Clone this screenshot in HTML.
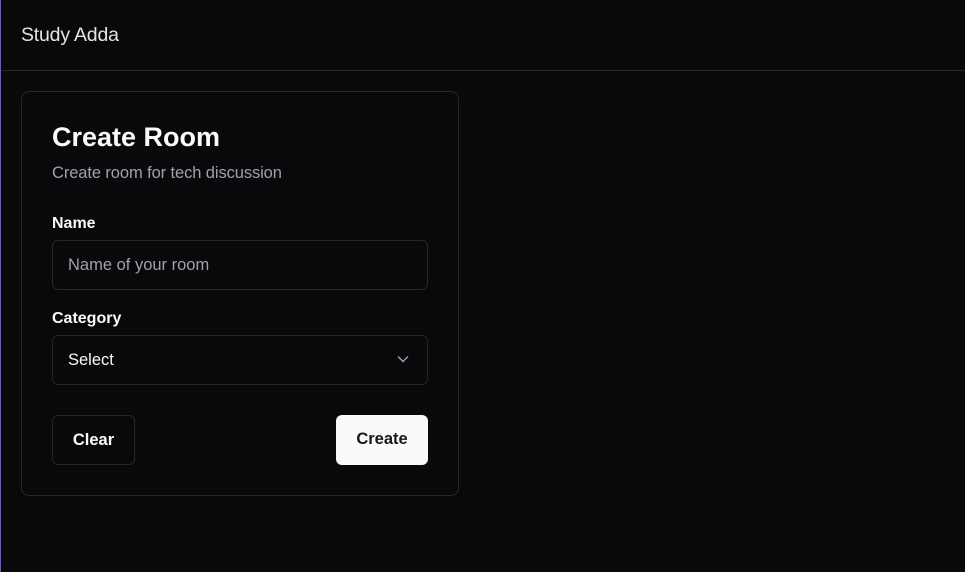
<!DOCTYPE html>
<html><head><style>
*{box-sizing:border-box;margin:0;padding:0}
body{width:965px;height:572px;background:#09090b;font-family:"Liberation Sans",sans-serif;color:#fafafa;position:relative;overflow:hidden}
.bl{position:absolute;left:0;top:0;width:1px;height:572px;background:#5b5bf0}
.hdr{position:absolute;left:0;top:0;width:965px;height:71px;border-bottom:1px solid #27272a}
.brand{position:absolute;left:21px;top:24px;font-size:19.5px;font-weight:300;color:#e4e4e7;letter-spacing:-0.2px}
.card{position:absolute;left:21px;top:91px;width:438px;height:405px;border:1px solid #27272a;border-radius:8px}
.abs{position:absolute}
h1{position:absolute;left:30px;top:30px;font-size:27px;font-weight:700}
.sub{left:30px;top:72px;font-size:16.5px;color:#a1a1aa;letter-spacing:-0.1px}
.lbl{left:30px;font-size:16px;font-weight:600}
.box{position:absolute;left:30px;width:376px;height:50px;border:1px solid #27272a;border-radius:6px;font-size:16.5px;padding:15px 15px}
.btn{position:absolute;top:323px;height:50px;border-radius:6px;font-size:16.5px;font-weight:600;text-align:center;line-height:48px}
</style></head><body>
<div class="hdr"><div class="brand">Study Adda</div></div>
<div class="bl"></div>
<div class="card">
<h1>Create Room</h1>
<div class="abs sub">Create room for tech discussion</div>
<div class="abs lbl" style="top:123px">Name</div>
<div class="box" style="top:148px;color:#a1a1aa">Name of your room</div>
<div class="abs lbl" style="top:218px">Category</div>
<div class="box" style="top:243px;color:#fafafa">Select
<svg style="position:absolute;right:18px;top:19px" width="12" height="8" viewBox="0 0 12 8"><path d="M1 1.5l5 5 5-5" fill="none" stroke="#a1a1aa" stroke-width="1.4"/></svg></div>
<div class="btn" style="left:30px;width:83px;border:1px solid #27272a">Clear</div>
<div class="btn" style="left:314px;width:92px;background:#fafafa;color:#18181b">Create</div>
</div>
</body></html>
